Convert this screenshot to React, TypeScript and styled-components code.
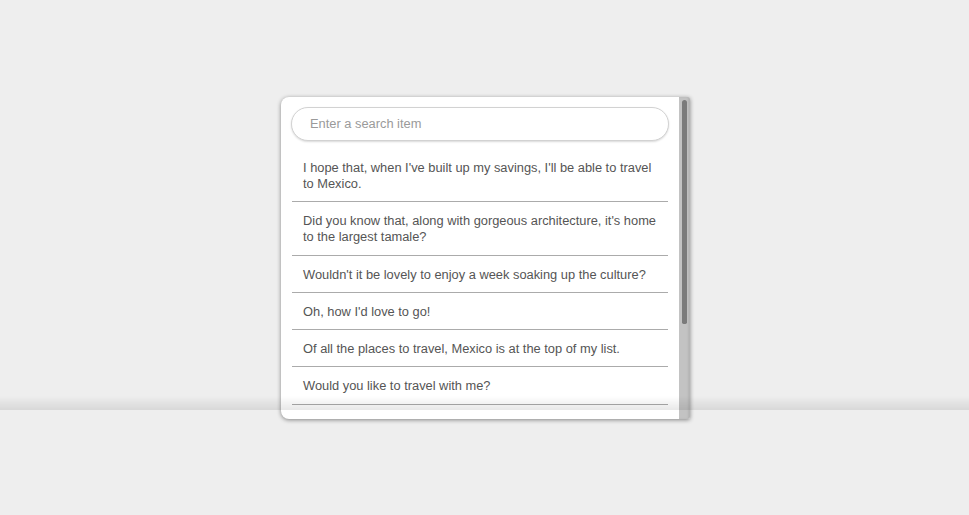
import React from "react";
import styled, { createGlobalStyle } from "styled-components";

const GlobalStyle = createGlobalStyle`
  html, body {
    margin: 0;
    padding: 0;
    background: #eeeeee;
    font-family: "Liberation Sans", Arial, sans-serif;
  }
  * { box-sizing: border-box; }
`;

const Page = styled.div`
  min-height: 100vh;
  display: flex;
  justify-content: center;
  align-items: flex-start;
  padding: 97px 0 0 2px;
`;

const Card = styled.div`
  width: 409px;
  height: 322px;
  display: flex;
  background: #ffffff;
  border-radius: 8px 2px 2px 8px;
  box-shadow: 0 1px 4px rgba(0, 0, 0, 0.45);
  overflow: hidden;
`;

const Content = styled.div`
  flex: 1;
  min-width: 0;
  height: 100%;
  overflow-y: auto;
  padding: 10px;
  scrollbar-width: none;
  &::-webkit-scrollbar {
    display: none;
  }
`;

const Track = styled.div`
  width: 11px;
  flex: none;
  height: 100%;
  background: #c3c3c3;
  padding: 3px 3px 0 3px;
  box-shadow: inset -2px 0 2px rgba(0, 0, 0, 0.08);
`;

const Thumb = styled.div`
  width: 5px;
  background: #7b7b7b;
  border-radius: 3px 3px 2px 2px;
`;

const SearchInput = styled.input`
  display: block;
  width: 100%;
  height: 34px;
  border: 1px solid #d2d2d2;
  border-radius: 17px;
  box-shadow: 0 1px 2px rgba(0, 0, 0, 0.15);
  padding: 0 18px 2px;
  font-family: "Liberation Sans", Arial, sans-serif;
  font-size: 12.85px;
  color: #555;
  outline: none;
  &::placeholder {
    color: #9a9a9a;
  }
`;

const List = styled.ul`
  list-style: none;
  margin: 8px 1px 0;
  padding: 0;
`;

const Item = styled.li`
  padding: 11px 11px 9.25px;
  border-bottom: 1px solid #ababab;
  font-size: 12.85px;
  line-height: 16px;
  color: #555555;
`;

const Fade = styled.div`
  position: fixed;
  left: 0;
  right: 0;
  top: 396px;
  height: 14px;
  pointer-events: none;
  background: linear-gradient(to bottom, rgba(0, 0, 0, 0), rgba(0, 0, 0, 0.09));
`;

const items = [
  "I hope that, when I've built up my savings, I'll be able to travel to Mexico.",
  "Did you know that, along with gorgeous architecture, it's home to the largest tamale?",
  "Wouldn't it be lovely to enjoy a week soaking up the culture?",
  "Oh, how I'd love to go!",
  "Of all the places to travel, Mexico is at the top of my list.",
  "Would you like to travel with me?",
  "Isn't language learning fun?",
  "Let's plan our trip together!",
  "Mexico City is waiting for us.",
];

export default function App() {
  return (
    <>
      <GlobalStyle />
      <Page>
        <Card>
          <Content>
            <SearchInput type="text" placeholder="Enter a search item" />
            <List>
              {items.map((t) => (
                <Item key={t}>{t}</Item>
              ))}
            </List>
          </Content>
          <Track>
            <Thumb style={{ height: 224 }} />
          </Track>
        </Card>
      </Page>
      <Fade />
    </>
  );
}
